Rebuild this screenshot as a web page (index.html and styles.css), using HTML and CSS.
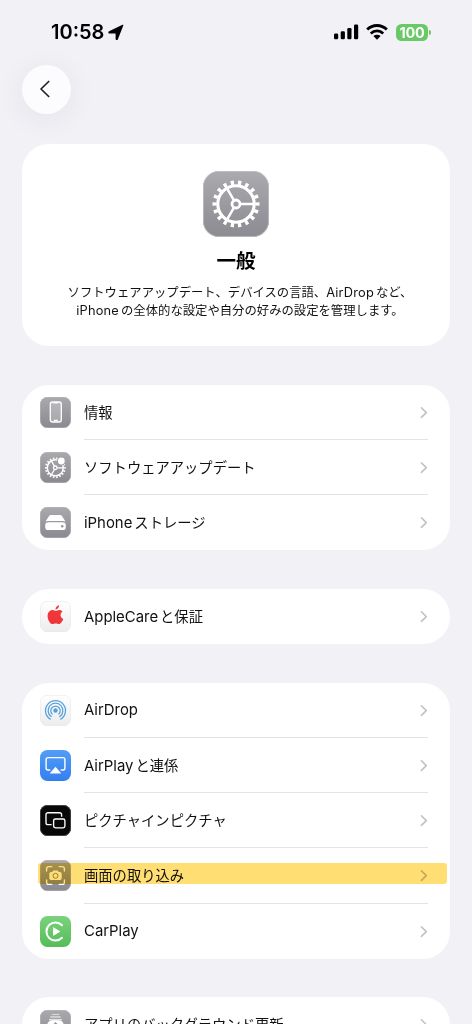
FILE: index.html
```html
<!DOCTYPE html>
<html lang="ja">
<head>
<meta charset="utf-8">
<title>一般</title>
<link rel="stylesheet" href="styles.css">
</head>
<body>
<svg class="defs" aria-hidden="true">
  <defs>
    <symbol id="chevron" viewBox="0 0 8 12"><path d="M1.4 1.2 6.3 6 1.4 10.8" fill="none" stroke="currentColor" stroke-width="1.6" stroke-linecap="round" stroke-linejoin="round"/></symbol>
    <symbol id="gear" viewBox="0 0 66 66">
      <g fill="none" stroke="#fff">
        <circle cx="33" cy="33" r="18.2" stroke-width="3.1"/>
        <circle cx="33" cy="33" r="21.4" stroke-width="4.2" pathLength="180" stroke-dasharray="4.4 5.6" stroke-dashoffset="2.2"/>
        <circle cx="33" cy="33" r="4" stroke-width="2.8"/>
        <path d="M37.5 33H51M30.8 29.1 24 17.3M30.8 36.9 24 48.7" stroke-width="2.5"/>
      </g>
    </symbol>
  </defs>
</svg>
<div class="screen">
  <header class="status">
    <div class="clock"><span>10:58</span>
      <svg width="16" height="17" viewBox="0 0 16 17"><path d="M15.2 1.7 9.8 15.4c-.4 1-2.2.8-2.2-.4V9.6H1.6C.1 9.6-.1 7.7 1.1 7.2L14 1c.9-.4 1.6-.1 1.2.7z"/></svg>
    </div>
    <div class="indicators">
      <svg width="25" height="16" viewBox="0 0 25 16"><rect x="0" y="9.4" width="4.2" height="5.8" rx="1.3"/><rect x="6.7" y="7.2" width="4.2" height="8" rx="1.3"/><rect x="13.3" y="3.9" width="4.2" height="11.3" rx="1.3"/><rect x="20" y=".4" width="4.2" height="14.8" rx="1.3"/></svg>
      <svg class="wifi" width="22" height="16" viewBox="0 0 22 16"><g fill="none" stroke="#000" stroke-width="2.8"><path d="M1.2 5.6a13.8 13.8 0 0 1 19.6 0"/><path d="M4.8 9.4a8.9 8.9 0 0 1 12.4 0"/></g><path d="M11 15.7 7.4 12.1a5.2 5.2 0 0 1 7.2 0z"/></svg>
      <div class="battery"><span class="level">100</span><i class="tip"></i></div>
    </div>
  </header>
  <nav class="nav"><button class="back" aria-label="戻る"><svg width="12" height="18" viewBox="0 0 12 18"><path d="M9.7 1.5 2 9l7.7 7.5" fill="none" stroke="#222" stroke-width="1.7" stroke-linecap="round" stroke-linejoin="round"/></svg></button></nav>
  <main>
    <section class="card hero">
      <div class="hero-icon"><svg width="66" height="66"><use href="#gear"/></svg></div>
      <h1>一般</h1>
      <p>ソフトウェアアップデート、デバイスの言語、<span class="en">AirDrop</span>など、<br><span class="en">iPhone</span>の全体的な設定や自分の好みの設定を管理します。</p>
    </section>

    <section class="card list">
      <div class="row"><span class="icon gray"><svg viewBox="0 0 31 31"><rect x="10.3" y="5" width="11" height="20" rx="2.2" fill="#ffffff38" stroke="#fff" stroke-width="1.3"/><path d="M13.5 5.7h4.6M13.8 23.5h4" stroke="#fff" stroke-width="1.5"/></svg></span><div class="label">情報</div><svg class="chev"><use href="#chevron"/></svg></div>
      <div class="row"><span class="icon gray"><svg viewBox="0 0 31 31"><g fill="none" stroke="#fff"><circle cx="15.3" cy="15.8" r="8" stroke-width="1.5"/><circle cx="15.3" cy="15.8" r="9.4" stroke-width="2" pathLength="180" stroke-dasharray="4.8 5.2" stroke-dashoffset="2.4"/><circle cx="15.3" cy="15.8" r="1.8" stroke-width="1.3"/><path d="M17.3 15.8h6M14.4 14.1l-3-5.2M14.4 17.5l-3 5.2" stroke-width="1.3"/></g><circle cx="21.3" cy="9" r="4.5" fill="#a0a0a5"/><circle cx="21.3" cy="9" r="3.4" fill="#fff"/></svg></span><div class="label">ソフトウェアアップデート</div><svg class="chev"><use href="#chevron"/></svg></div>
      <div class="row"><span class="icon gray"><svg viewBox="0 0 31 31"><path d="M9.2 8.7c.4-.6.9-.8 1.6-.8h9.4c.7 0 1.2.2 1.6.8l3.7 5.8q-1-.4-2-.4h-16q-1 0-2 .4z" fill="#fff"/><rect x="5.2" y="15.3" width="20.6" height="7.8" rx="3.2" fill="#fff"/><circle cx="22.2" cy="19.3" r="1.2" fill="#8d8d92"/></svg></span><div class="label"><span class="en">iPhone</span>ストレージ</div><svg class="chev"><use href="#chevron"/></svg></div>
    </section>

    <section class="card list">
      <div class="row"><span class="icon light"><svg viewBox="0 0 31 31" fill="#ef363b"><path d="M15.8 9.8c.9 0 1.9-.9 3.5-.9 1.4 0 2.6.7 3.3 1.7-3 1.9-2.5 6.1.7 7.4-.8 2.2-2.5 5.1-4.4 5.1-1.2 0-1.7-.7-3.2-.7s-2 .7-3.2.7c-2.3 0-4.9-4.2-4.9-8.1 0-3.8 2.3-6.1 4.9-6.1 1.5 0 2.5.9 3.3.9z"/><path d="M15.5 8.5c-.1-2.1 1.6-4 3.5-4.2.2 2.2-1.5 4.2-3.5 4.2z"/></svg></span><div class="label"><span class="en">AppleCare</span>と保証</div><svg class="chev"><use href="#chevron"/></svg></div>
    </section>

    <section class="card list">
      <div class="row"><span class="icon light"><svg viewBox="0 0 31 31"><g fill="none" stroke="#55a0dc" stroke-width="1.25" stroke-linecap="round"><path d="M10.2 24.1a10 10 0 1 1 10.6 0"/><path d="M11.2 21.6a7.4 7.4 0 1 1 8.6 0"/><path d="M12.2 19.1a4.7 4.7 0 1 1 6.6 0"/></g><circle cx="15.5" cy="15.5" r="2.2" fill="#55a0dc"/></svg></span><div class="label"><span class="en">AirDrop</span></div><svg class="chev"><use href="#chevron"/></svg></div>
      <div class="row"><span class="icon blue"><svg viewBox="0 0 31 31"><path d="M9.8 20H8.1a2 2 0 0 1-2-2V9.6a2 2 0 0 1 2-2h14.8a2 2 0 0 1 2 2V18a2 2 0 0 1-2 2h-1.7" fill="none" stroke="#fff" stroke-width="1.4" stroke-linecap="round"/><path d="m15.5 16.8 5.2 5.9c.4.5.2.9-.4.9h-9.6c-.6 0-.8-.4-.4-.9z" fill="#fff"/></svg></span><div class="label"><span class="en">AirPlay</span>と連係</div><svg class="chev"><use href="#chevron"/></svg></div>
      <div class="row"><span class="icon black"><svg viewBox="0 0 31 31" fill="none" stroke="#fff" stroke-width="1.35"><path d="M11.6 19.6H7.9a1.9 1.9 0 0 1-1.9-1.9V9.6a1.9 1.9 0 0 1 1.9-1.9h11.8a1.9 1.9 0 0 1 1.9 1.9v2.1"/><rect x="13.6" y="14" width="11.3" height="8.8" rx="1.8"/></svg></span><div class="label">ピクチャインピクチャ</div><svg class="chev"><use href="#chevron"/></svg></div>
      <div class="row"><span class="icon gray"><svg viewBox="0 0 31 31"><path d="M6.6 11V8.8a2.2 2.2 0 0 1 2.2-2.2h3M19.2 6.6h3a2.2 2.2 0 0 1 2.2 2.2V11M24.4 20v2.2a2.2 2.2 0 0 1-2.2 2.2h-3M11.8 24.4h-3a2.2 2.2 0 0 1-2.2-2.2V20" fill="none" stroke="#fff" stroke-width="1.4" stroke-linecap="round"/><path d="M11 12h1.2l1-1.4h4.6l1 1.4H20a1.7 1.7 0 0 1 1.7 1.7v4.6A1.7 1.7 0 0 1 20 20h-9a1.7 1.7 0 0 1-1.7-1.7v-4.6A1.7 1.7 0 0 1 11 12z" fill="#fff"/><circle cx="15.5" cy="15.8" r="2.5" fill="none" stroke="#929297" stroke-width="1"/></svg></span><div class="label">画面の取り込み</div><svg class="chev"><use href="#chevron"/></svg><i class="marker"></i></div>
      <div class="row"><span class="icon green"><svg viewBox="0 0 31 31"><path d="M22 9.3a9 9 0 1 0 0 12.4" fill="none" stroke="#fff" stroke-width="2" stroke-linecap="round"/><path d="M13 11.9v7.2c0 .6.4.8.9.5l5.7-3.5c.5-.3.5-.9 0-1.2l-5.7-3.5c-.5-.3-.9-.1-.9.5z" fill="#fff"/></svg></span><div class="label"><span class="en">CarPlay</span></div><svg class="chev"><use href="#chevron"/></svg></div>
    </section>

    <section class="card list">
      <div class="row"><span class="icon gray"><svg viewBox="0 0 31 31"><path d="M11.7 4.5h7.6" stroke="#ffffff99" stroke-width="1.1"/><path d="M10.3 7h10.4" stroke="#ffffffbb" stroke-width="1.3"/><path d="M9 9.2h13v1.2H9z" fill="#ffffffdd"/><rect x="7.2" y="10.2" width="16.6" height="15" rx="5.2" fill="#fff"/><path d="M15.5 18v-5m-2.4 2.4 2.4-2.4 2.4 2.4" fill="none" stroke="#929297" stroke-width="1.3"/></svg></span><div class="label">アプリのバックグラウンド更新</div><svg class="chev"><use href="#chevron"/></svg></div>
    </section>
  </main>
</div>
</body>
</html>
```
FILE: styles.css
```css
* { box-sizing: border-box; }
body { margin: 0; background: #f1f1f6; color: #111; font-family: Inter, "Noto Sans CJK JP", sans-serif; }
.defs { position: absolute; width: 0; height: 0; }
.screen { height: 1024px; overflow: hidden; }

.status { height: 64.6px; padding: 23px 41px 0 51px; display: flex; justify-content: space-between; align-items: flex-start; color: #000; }
.clock { display: flex; align-items: center; gap: 4px; height: 18px; font-size: 20px; font-weight: 600; letter-spacing: 0; }
.indicators { display: flex; align-items: center; height: 18px; }
.wifi { margin: 0 8px 0 7px; }
.battery { display: flex; align-items: center; gap: 1px; }
.level { width: 32px; height: 17px; border-radius: 5.5px; background: #68c966; color: #fff; font-size: 14.5px; line-height: 17px; font-weight: 700; text-align: center; letter-spacing: -.3px; }
.tip { width: 2px; height: 5px; border-radius: 0 2px 2px 0; background: #68c966; }

.nav { height: 79.1px; padding-left: 22px; }
.back { width: 49px; height: 49px; padding: 0 4px 0 0; border: 0; border-radius: 50%; background: #fcfcff; box-shadow: 0 5px 30px rgba(40, 40, 60, .07); display: flex; align-items: center; justify-content: center; }

main { padding: 0 22px; display: flex; flex-direction: column; gap: 38.8px; }
.card { background: #fff; border-radius: 27px; }
.hero { height: 202.3px; padding-top: 27.3px; display: flex; flex-direction: column; align-items: center; text-align: center; }
.hero-icon { width: 66px; height: 66px; border-radius: 16px; background: linear-gradient(#aaaaaf, #8b8b91); box-shadow: inset 0 0 0 .7px #c4c4c8; }
.hero-icon svg { display: block; }
h1 { margin: 10px 0 0; font-size: 19.5px; line-height: 28px; font-weight: 700; color: #000; }
.hero p { margin: 9px 0 0; padding-left: 8px; font-size: 12.35px; line-height: 18px; white-space: nowrap; }
.hero .en { font-size: 12.8px; letter-spacing: .2px; margin-right: 2px; }

.list { padding: 0 22px 0 18px; }
.row { position: relative; height: 55.15px; display: flex; align-items: center; gap: 13px; }
.row + .row .label, .row + .row .chev { box-shadow: 0 -1px #e3e3e6; }
.label { flex: 1; height: 100%; display: flex; align-items: baseline; font-size: 14.3px; line-height: 55px; white-space: nowrap; }
.label .en { font-size: 14.9px; margin-right: 2px; }
.icon { width: 31px; height: 31px; border-radius: 7.5px; flex: none; }
.icon svg { display: block; width: 31px; height: 31px; }
.gray { background: linear-gradient(#a9a9ae, #89898f); box-shadow: inset 0 0 0 .5px #bababf; }
.light { background: linear-gradient(#fff, #ececee); box-shadow: inset 0 0 0 .5px #e7e7e9; }
.blue { background: linear-gradient(#529df6, #347ff0); }
.black { background: #080808; box-shadow: inset 0 0 0 .7px #555; }
.green { background: linear-gradient(#7bd27d, #55bd59); }
.chev { width: 8px; height: 100%; margin-left: -13px; color: #c2c2c6; }
.marker { position: absolute; left: -2px; right: -19px; top: 14.5px; height: 21px; border-radius: 3px; background: #ffde74; mix-blend-mode: multiply; }
```
